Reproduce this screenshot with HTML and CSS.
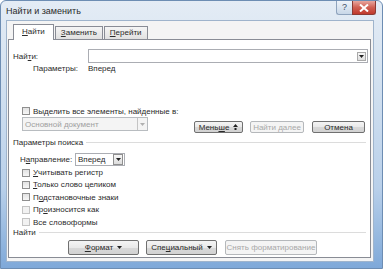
FILE: index.html
```html
<!DOCTYPE html>
<html lang="ru">
<head>
  <meta charset="UTF-8" />
  <title>Найти и заменить</title>
  <link rel="stylesheet" href="styles.css">
</head>
<body>
  <div class="window">
    <div class="titlebar">
      <span class="title">Найти и заменить</span>
      <div class="caption">
        <span class="cap-help">?</span>
        <span class="cap-close">
          <svg width="10" height="8" viewBox="0 0 10 8"><path d="M1 0.5 L9 7.5 M9 0.5 L1 7.5" stroke="#fff" stroke-width="2"/></svg>
        </span>
      </div>
    </div>

    <div class="client">
      <div class="tabs">
        <span class="tab active"><u>Н</u>айти</span>
        <span class="tab"><u>З</u>аменить</span>
        <span class="tab"><u>П</u>ерейти</span>
      </div>

      <div class="panel">
        <div class="find-row">
          <span class="find-label">Най<u>т</u>и:</span>
          <div class="find-input">
            <span class="drop"><svg width="5" height="3" viewBox="0 0 5 3"><path d="M0 0 H5 L2.5 3 Z" fill="#222"/></svg></span>
          </div>
        </div>
        <div class="params-row">
          <span class="params-label">Параметры:</span>
          <span>Вперед</span>
        </div>

        <div class="check-row highlight">
          <span class="check"></span>
          <span>Выделить все элементы, найденные в:</span>
        </div>

        <div class="doc-row">
          <div class="combo disabled">
            <span class="combo-text">Основной документ</span>
            <span class="combo-btn"><svg width="5" height="3" viewBox="0 0 5 3"><path d="M0 0 H5 L2.5 3 Z" fill="#b0b0b0"/></svg></span>
          </div>
          <div class="actions">
            <span class="btn less"><span>Мень<u>ш</u>е</span>
              <svg width="5" height="6" viewBox="0 0 5 6"><path d="M0 3 L2.5 0 L5 3 Z M1.5 4 H3.5 V6 H1.5 Z" fill="#222"/></svg>
            </span>
            <span class="btn next disabled"><span>Найти далее</span></span>
            <span class="btn cancel"><span>Отмена</span></span>
          </div>
        </div>

        <div class="group-head">
          <span>Параметры поиска</span>
          <span class="rule"></span>
        </div>

        <div class="dir-row">
          <span class="dir-label">Н<u>а</u>правление:</span>
          <div class="combo dir">
            <span class="combo-text">Вперед</span>
            <span class="combo-btn"><svg width="5" height="3" viewBox="0 0 5 3"><path d="M0 0 H5 L2.5 3 Z" fill="#222"/></svg></span>
          </div>
        </div>

        <div class="options">
          <div class="check-row"><span class="check"></span><span><u>У</u>читывать регистр</span></div>
          <div class="check-row"><span class="check"></span><span><u>Т</u>олько слово целиком</span></div>
          <div class="check-row"><span class="check"></span><span>П<u>о</u>дстановочные знаки</span></div>
          <div class="check-row"><span class="check off"></span><span>Пр<u>о</u>износится как</span></div>
          <div class="check-row"><span class="check off"></span><span>Все словоформы</span></div>
        </div>

        <div class="group-head small">
          <span>Найти</span>
          <span class="rule"></span>
        </div>

        <div class="bottom-row">
          <span class="btn wide"><span><u>Ф</u>ормат</span>
            <svg width="5" height="3" viewBox="0 0 5 3"><path d="M0 0 H5 L2.5 3 Z" fill="#222"/></svg>
          </span>
          <span class="btn wide"><span>Спе<u>ц</u>иальный</span>
            <svg width="5" height="3" viewBox="0 0 5 3"><path d="M0 0 H5 L2.5 3 Z" fill="#222"/></svg>
          </span>
          <span class="btn clear disabled"><span>Снять форматирование</span></span>
        </div>
      </div>
    </div>
  </div>
</body>
</html>
```

FILE: styles.css
```css
* {
  box-sizing: border-box;
  font-family: 'Liberation Sans', Arial, sans-serif;
}

body {
  margin: 0;
  background: #fff;
}

u {
  text-decoration: underline;
}

.window {
  width: 383px;
  height: 269px;
  border: 1px solid #6d8db3;
  border-radius: 6px 6px 0 0;
  background: linear-gradient(#e4ecf5 0, #d3e1f0 30%, #b9d0ea 70%, #7fa9d9 100%);
  overflow: hidden;
}

/* title bar */
.titlebar {
  height: 19px;
  display: flex;
  align-items: flex-start;
}

.title {
  margin: 5px 0 0 5px;
  font-size: 9px;
  color: #2a2a2a;
}

.caption {
  margin-left: auto;
  margin-right: 6px;
  display: flex;
}

.cap-help {
  width: 16px;
  height: 14px;
  border: 1px solid #8ea3bd;
  border-top: none;
  border-right: none;
  border-radius: 0 0 0 3px;
  background: linear-gradient(#eef3f9, #c8d7e8);
  color: #3d4f66;
  font-size: 9px;
  text-align: center;
  line-height: 13px;
}

.cap-close {
  width: 24px;
  height: 14px;
  border: 1px solid #8b3a33;
  border-top: none;
  border-radius: 0 0 3px 0;
  background: linear-gradient(#e8a79f, #d05f52 50%, #c0392c);
  display: flex;
  align-items: center;
  justify-content: center;
}

/* client area */
.client {
  margin: 0 8px 0 5px;
  height: 242px;
  background: #f4f4f4;
  border: 1px solid #9fb4cc;
  padding: 0 0 0 1px;
}

.tabs {
  height: 18px;
  padding-left: 5px;
  display: flex;
  align-items: flex-end;
}

.tab {
  height: 13px;
  padding: 0 5px;
  margin-right: 1px;
  border: 1px solid #898c95;
  border-bottom: none;
  background: linear-gradient(#f5f5f5, #e1e1e1);
  font-size: 8px;
  line-height: 12px;
  color: #2a2a2a;
}

.tab.active {
  height: 16px;
  margin-bottom: -1px;
  padding: 0 8px;
  background: #fff;
  position: relative;
  line-height: 14px;
}

.panel {
  width: 363px;
  height: 219px;
  border: 1px solid #898c95;
  background: #fff;
  padding: 9px 2px 0 4px;
  font-size: 8px;
  color: #2a2a2a;
}

.find-row {
  display: flex;
  align-items: center;
  height: 14px;
}

.find-label {
  width: 75px;
}

.find-input {
  flex: 1;
  height: 14px;
  border: 1px solid #abadb3;
  display: flex;
  justify-content: flex-end;
  align-items: center;
  padding-right: 1px;
}

.drop {
  width: 9px;
  height: 9px;
  border: 1px solid #a9a9a9;
  background: linear-gradient(#f7f7f7, #dedede);
  display: flex;
  align-items: center;
  justify-content: center;
}

.params-row {
  height: 11px;
  display: flex;
  align-items: center;
  padding-left: 20px;
}

.params-label {
  width: 55px;
}

.check-row {
  display: flex;
  align-items: center;
  gap: 3px;
  height: 12.4px;
  padding-left: 9px;
}

.check-row.highlight {
  margin-top: 31px;
}

.check {
  width: 8px;
  height: 8px;
  border: 1px solid #8f8f8f;
  background: linear-gradient(#e2e2e2, #f6f6f6);
}

.check.off {
  border-color: #c4c4c4;
  background: #f2f2f2;
}

.doc-row {
  display: flex;
  align-items: flex-start;
  height: 16px;
}

.combo {
  display: flex;
  align-items: center;
  height: 14px;
  border: 1px solid #abadb3;
  background: #fff;
}

.combo.disabled {
  margin-left: 9px;
  width: 126px;
  background: #f4f4f4;
  border-color: #b8bcc0;
  color: #a0a0a0;
}

.combo-text {
  flex: 1;
  padding-left: 2px;
}

.combo-btn {
  width: 10px;
  height: 12px;
  border-left: 1px solid #c4c4c4;
  display: flex;
  align-items: center;
  justify-content: center;
}

.combo.dir {
  width: 50px;
  height: 13px;
}

.combo.dir .combo-btn {
  border: 1px solid #8f8f8f;
  background: linear-gradient(#f7f7f7, #dcdcdc);
  height: 11px;
  margin-right: 1px;
}

.actions {
  margin-left: auto;
  margin-right: 3px;
  margin-top: 4px;
  display: flex;
  gap: 7px;
}

.btn {
  height: 12px;
  border: 1px solid #707070;
  border-radius: 2px;
  background: linear-gradient(#f4f4f4 0, #e9e9e9 50%, #d8d8d8 51%, #d2d2d2 100%);
  display: flex;
  align-items: center;
  justify-content: center;
  gap: 4px;
  color: #2a2a2a;
}

.btn.disabled {
  border-color: #b5b8bb;
  background: #f4f4f4;
  color: #a8a8a8;
}

.btn.less {
  width: 49px;
}

.btn.next {
  width: 54px;
}

.btn.cancel {
  width: 53px;
  margin-left: 1px;
}

.group-head {
  display: flex;
  align-items: center;
  height: 8px;
  margin-top: 5px;
}

.group-head .rule {
  flex: 1;
  height: 1px;
  margin: 0 2px 0 3px;
  background: #dcdcdc;
}

.group-head.small {
  margin-top: 0;
  height: 8px;
}

.dir-row {
  display: flex;
  align-items: center;
  height: 14px;
  margin-top: 6px;
  padding-left: 7px;
}

.dir-label {
  width: 55px;
}

.bottom-row {
  display: flex;
  gap: 7px;
  margin-top: 4px;
  padding-left: 55px;
}

.bottom-row .btn {
  height: 15px;
}

.btn.wide {
  width: 71px;
}

.btn.clear {
  width: 92px;
  margin-left: 1px;
}
```
